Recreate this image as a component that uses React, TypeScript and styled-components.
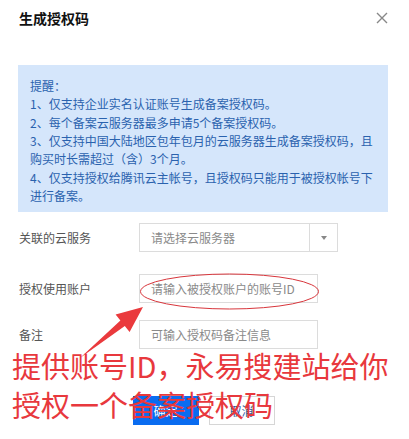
import React from "react";
import styled, {createGlobalStyle} from "styled-components";

const GlobalStyle = createGlobalStyle`
  html, body {
    margin: 0;
    padding: 0;
    background: #fff;
  }
  body {
    font-family: "Noto Sans CJK SC", "Noto Sans", sans-serif;
    font-size: 12px;
  }
`

const Dialog = styled.div`
  position: relative;
  width: 409px;
  height: 439px;
  padding: 0 21px 0 18px;
  box-sizing: border-box;
  overflow: hidden;
`

const Header = styled.div`
  height: 35px;
  display: flex;
  align-items: center;
  justify-content: space-between;
  padding-left: 1px;
`

const Title = styled.h3`
  margin: 0;
  font-size: 14px;
  font-weight: 700;
  color: #111;
  line-height: 20px;
`

const CloseButton = styled.button`
  width: 14px;
  height: 14px;
  padding: 0;
  margin-right: -1px;
  border: 0;
  background: none;
  display: flex;
  align-items: center;
  justify-content: center;
  cursor: pointer;
`

const Notice = styled.div`
  margin-top: 30px;
  height: 147px;
  box-sizing: border-box;
  padding: 12px 10px 7px 12px;
  background: #d5e6fb;
  color: #2a62ae;
  font-size: 12px;
  line-height: 18.35px;
`

const NoticeLine = styled.div``

const Row = styled.div<{ $top: number }>`
  display: flex;
  align-items: center;
  margin-top: ${p => p.$top}px;
  height: 29px;
`

const Label = styled.label`
  width: 120px;
  padding-left: 1px;
  color: #555;
  font-size: 12px;
`

const Field = styled.div<{ $width: number }>`
  width: ${p => p.$width}px;
  height: 29px;
  box-sizing: border-box;
  border: 1px solid #dcdcdc;
  display: flex;
  align-items: center;
  background: #fff;
`

const Placeholder = styled.span`
  flex: 1;
  padding-left: 11px;
  color: #8a8a8a;
  font-size: 12px;
  white-space: nowrap;
`

const Caret = styled.span`
  width: 27px;
  height: 100%;
  border-left: 1px solid #dcdcdc;
  display: flex;
  align-items: center;
  justify-content: center;
  &::after {
    content: "";
    border-left: 3.5px solid transparent;
    border-right: 3.5px solid transparent;
    border-top: 4px solid #888;
  }
`

const Actions = styled.div`
  margin-top: 47px;
  display: flex;
  justify-content: center;
  gap: 10px;
  padding-left: 1px;
`

const Button = styled.button<{ $primary?: boolean }>`
  width: 66px;
  height: 29px;
  box-sizing: border-box;
  font-family: inherit;
  font-size: 12px;
  border: 1px solid ${p => p.$primary ? "#0a6cf0" : "#d6d6d6"};
  background: ${p => p.$primary ? "#0a6cf0" : "#fff"};
  color: ${p => p.$primary ? "#fff" : "#2b55a0"};
`

// red annotation drawn over the screenshot
const Marks = styled.svg`
  position: absolute;
  left: 0;
  top: 0;
  pointer-events: none;
`

const Callout = styled.div`
  position: absolute;
  left: 12px;
  top: 346px;
  color: #e8383d;
  font-size: 29px;
  line-height: 38.5px;
  white-space: nowrap;
  pointer-events: none;
`

const notes = [
  "提醒：",
  "1、仅支持企业实名认证账号生成备案授权码。",
  "2、每个备案云服务器最多申请5个备案授权码。",
  "3、仅支持中国大陆地区包年包月的云服务器生成备案授权码，且购买时长需超过（含）3个月。",
  "4、仅支持授权给腾讯云主帐号，且授权码只能用于被授权帐号下进行备案。",
]

export default function App() {
  return (
    <Dialog>
      <GlobalStyle/>
      <Header>
        <Title>生成授权码</Title>
        <CloseButton aria-label="关闭">
          <svg width="12" height="12" viewBox="0 0 12 12">
            <path d="M1 1L11 11M11 1L1 11" stroke="#888" strokeWidth="1.4" fill="none"/>
          </svg>
        </CloseButton>
      </Header>

      <Notice>
        {notes.map(n => <NoticeLine key={n}>{n}</NoticeLine>)}
      </Notice>

      <Row $top={11}>
        <Label>关联的云服务</Label>
        <Field $width={199}>
          <Placeholder>请选择云服务器</Placeholder>
          <Caret/>
        </Field>
      </Row>
      <Row $top={22}>
        <Label>授权使用账户</Label>
        <Field $width={179}>
          <Placeholder>请输入被授权账户的账号ID</Placeholder>
        </Field>
      </Row>
      <Row $top={17}>
        <Label>备注</Label>
        <Field $width={179}>
          <Placeholder>可输入授权码备注信息</Placeholder>
        </Field>
      </Row>

      <Actions>
        <Button $primary>确定</Button>
        <Button>取消</Button>
      </Actions>

      <Marks width="409" height="439" viewBox="0 0 409 439">
        <ellipse cx="229.5" cy="291.5" rx="89" ry="17.5" fill="none" stroke="#d8363c" strokeWidth="1"/>
        <polygon
          points="80,358 120.4,320.5 115.6,314.4 143,307 129.6,332 124.8,326"
          fill="#ea3a3d"
        />
      </Marks>
      <Callout>
        提供账号ID，永易搜建站给你<br/>
        授权一个备案授权码
      </Callout>
    </Dialog>
  );
}
